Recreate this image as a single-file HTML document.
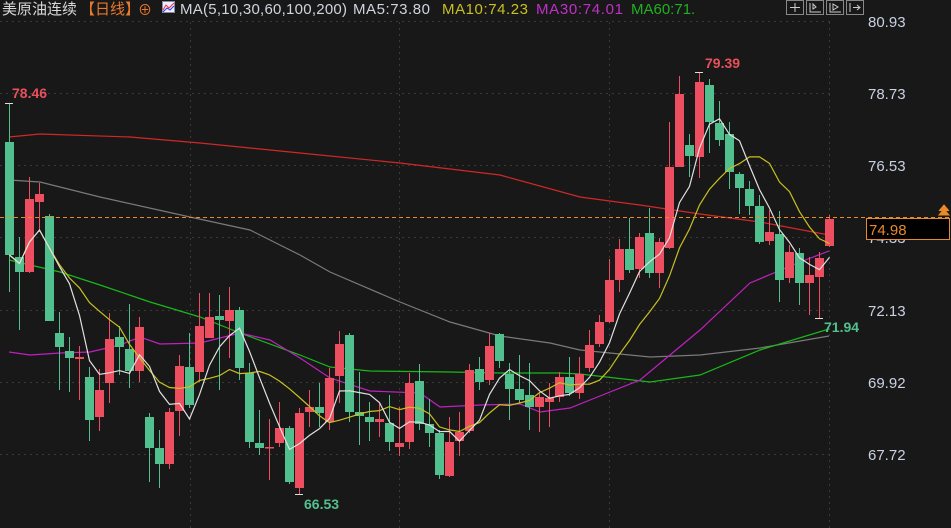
<!DOCTYPE html>
<html><head><meta charset="utf-8">
<style>
html,body{margin:0;padding:0;background:#181818;width:951px;height:528px;overflow:hidden}
svg{display:block}
text{font-family:"Liberation Sans","Noto Sans CJK SC",sans-serif}
</style></head>
<body>
<svg id="s" width="951" height="528" xmlns="http://www.w3.org/2000/svg">
<rect width="951" height="528" fill="#181818"/>
<g stroke="#3a3a3a" stroke-width="1" stroke-dasharray="2,4">
<line x1="0" y1="21.5" x2="830" y2="21.5"/>
<line x1="0" y1="93.5" x2="830" y2="93.5"/>
<line x1="0" y1="165.5" x2="830" y2="165.5"/>
<line x1="0" y1="237.5" x2="830" y2="237.5"/>
<line x1="0" y1="310.5" x2="830" y2="310.5"/>
<line x1="0" y1="382.5" x2="830" y2="382.5"/>
<line x1="0" y1="454.5" x2="830" y2="454.5"/>
<line x1="190.5" y1="22" x2="190.5" y2="528"/>
<line x1="399.5" y1="22" x2="399.5" y2="528"/>
<line x1="609.5" y1="22" x2="609.5" y2="528"/>
<line x1="829.5" y1="22" x2="829.5" y2="528"/>
</g>
<g id="lines" fill="none" stroke-width="1.2"></g>
<g id="candles"></g>
<g id="ma" fill="none" stroke-width="1.2"></g>
<line x1="0" y1="217.5" x2="951" y2="217.5" stroke="#e8892a" stroke-dasharray="4,3" stroke-width="1"/>
<g font-size="15" fill="#c9d1e0">
<text x="868" y="27">80.93</text>
<text x="868" y="99">78.73</text>
<text x="868" y="171">76.53</text>
<text x="868" y="243">74.33</text>
<text x="868" y="316">72.13</text>
<text x="868" y="388">69.92</text>
<text x="868" y="460">67.72</text>
</g>
<rect x="866.5" y="218.5" width="83" height="21" fill="#000" stroke="#e8892a"/>
<text x="869" y="235" font-size="15" fill="#e8892a">74.98</text>
<path d="M939 215 L944 209 L949 215 Z M939 211 L944 205 L949 211" fill="#e8892a" stroke="#e8892a" stroke-width="1"/>
<g font-size="14" font-weight="bold">
<text x="12" y="98" fill="#e8505c">78.46</text>
<text x="705" y="68" fill="#e8505c">79.39</text>
<text x="304" y="509" fill="#52c08e">66.53</text>
<text x="824" y="332" fill="#52c08e">71.94</text>
</g>
<g stroke="#ddd" stroke-width="1">
<line x1="5" y1="103.5" x2="13" y2="103.5"/><line x1="695" y1="72.5" x2="703" y2="72.5"/>
<line x1="295" y1="494.5" x2="303" y2="494.5"/><line x1="815" y1="318.5" x2="823" y2="318.5"/>
</g>
<g font-size="15">
<text x="2" y="14" fill="#d8d8d8">美原油连续</text>
<text x="80" y="14" fill="#e8782a">【日线】</text>
<text x="138" y="15" fill="#e8782a" font-size="14">⊕</text>
<rect x="162.5" y="1.5" width="12" height="11" fill="#eef" stroke="#88a"/>
<path d="M163 10 L166 5 L169 8 L174 3" stroke="#e33" fill="none"/>
<path d="M163 12 L167 8 L170 10 L174 6" stroke="#33e" fill="none"/>
<text x="180" y="14" fill="#d0d4dc" textLength="167">MA(5,10,30,60,100,200)</text>
<text x="353" y="14" fill="#d0d4dc" textLength="77">MA5:73.80</text>
<text x="442" y="14" fill="#c8c020" textLength="86">MA10:74.23</text>
<text x="536" y="14" fill="#c030c8" textLength="87">MA30:74.01</text>
<text x="631" y="14" fill="#20b020">MA60:71.</text>
</g>
<g stroke="#888" fill="none" stroke-width="1">
<rect x="786.5" y="0.5" width="17" height="14"/><rect x="806.5" y="0.5" width="17" height="14"/>
<rect x="826.5" y="0.5" width="17" height="14"/><rect x="846.5" y="0.5" width="17" height="14"/>
<path d="M795 3v9M790 7.5h10" stroke="#ccc"/>
<path d="M810 3v9h11M813 4v5l3-2z" stroke="#ccc"/>
<path d="M830 3v9h11M833 4v6l5-3z" stroke="#ccc"/>
<path d="M850 3v9M853 7.5h6M857 5l3 2.5-3 2.5" stroke="#ccc"/>
</g>
</svg>
<script>
var C=[
[142,255,103,292],[257,272,237,330],[272,199,177,273],[202,194,183,232],[216,321,214,321],
[333,347,312,390],[351,358,337,392],[359,357,346,400],[377,420,367,441],[417,390,369,431],
[383,339,313,403],[337,347,326,375],[349,371,304,388],[371,327,317,382],[417,448,413,482],
[448,464,430,488],[464,412,408,469],[411,366,355,436],[367,405,333,408],[372,326,293,382],
[338,317,293,338],[316,320,295,390],[321,310,287,358],[310,368,307,380],[373,442,363,448],
[443,448,410,455],[448,447,419,480],[443,428,402,447],[428,482,426,484],[488,413,408,494],
[412,407,390,427],[407,413,383,427],[422,378,368,430],[376,344,331,403],[335,412,333,422],
[412,416,372,445],[417,422,402,441],[422,419,403,437],[423,442,395,451],[447,443,407,456],
[442,383,373,449],[381,424,364,430],[424,433,399,447],[433,475,430,479],[476,442,417,477],
[441,432,412,456],[431,370,364,433],[369,382,357,390],[380,346,333,385],[334,361,333,368],
[374,389,363,420],[389,400,355,403],[395,407,363,430],[407,397,392,432],[402,398,383,427],
[397,377,372,402],[377,393,357,396],[393,374,357,399],[368,345,330,372],[344,322,315,347],
[322,280,259,323],[280,249,239,292],[249,270,218,273],[269,237,233,278],[233,273,208,278],
[273,242,238,288],[248,167,122,249],[167,94,76,167],[145,156,134,177],[157,82,72,178],
[85,122,79,153],[123,140,101,146],[134,172,122,189],[174,188,172,214],[189,206,181,215],
[206,242,195,244],[241,232,210,245],[234,280,211,302],[278,252,245,283],[253,283,248,305],
[283,275,257,315],[277,258,252,318],[246,219,215,247]];
var g=document.getElementById('candles'),h='';
C.forEach(function(c,k){var x=9+10*k,up=c[1]<c[0],col=up?'#ee4f60':'#52c08e';
var t=Math.min(c[0],c[1]),b=Math.max(c[0],c[1]);if(b-t<1.5)b=t+1.5;
h+='<line x1="'+(x+.5)+'" y1="'+c[2]+'" x2="'+(x+.5)+'" y2="'+c[3]+'" stroke="'+col+'" stroke-width="1"/>';
h+='<rect x="'+(x-4)+'" y="'+t+'" width="9" height="'+(b-t)+'" fill="'+col+'"/>';});
g.innerHTML=h;
function ma(n){var p=[];for(var k=0;k<C.length;k++){var s=0,m=0;for(var j=Math.max(0,k-n+1);j<=k;j++){s+=C[j][1];m++;}p.push((9+10*k+.5)+','+(s/m).toFixed(1));}return p.join(' ');}
var L={
'#d02828':'9,137 40,134 130,137 200,143 300,153 400,163 500,175 580,197 640,205 700,214 760,222 829,235',
'#7a7a7a':'9,180 40,182 100,197 190,217 250,230 300,255 330,272 400,302 450,322 500,336 550,343 580,350 650,357 700,355 760,348 829,336',
'#18b818':'9,260 60,272 100,285 150,302 200,317 240,333 300,355 330,367 370,371 450,372 500,373 560,373 580,374 650,382 700,375 760,350 829,329',
'#c020c0':'9,352 30,355 60,353 90,352 120,345 140,337 160,344 200,343 240,333 270,340 300,358 330,378 370,391 420,393 440,407 480,405 520,404 540,412 570,408 590,400 640,380 700,330 750,283 800,262 829,251'};
var lh='';for(var c in L)lh+='<polyline points="'+L[c]+'" stroke="'+c+'"/>';
document.getElementById('lines').innerHTML=lh;
document.getElementById('ma').innerHTML='<polyline points="'+ma(10)+'" stroke="#c8c020"/><polyline points="'+ma(5)+'" stroke="#e0e0e0"/>';
</script>
</body></html>
